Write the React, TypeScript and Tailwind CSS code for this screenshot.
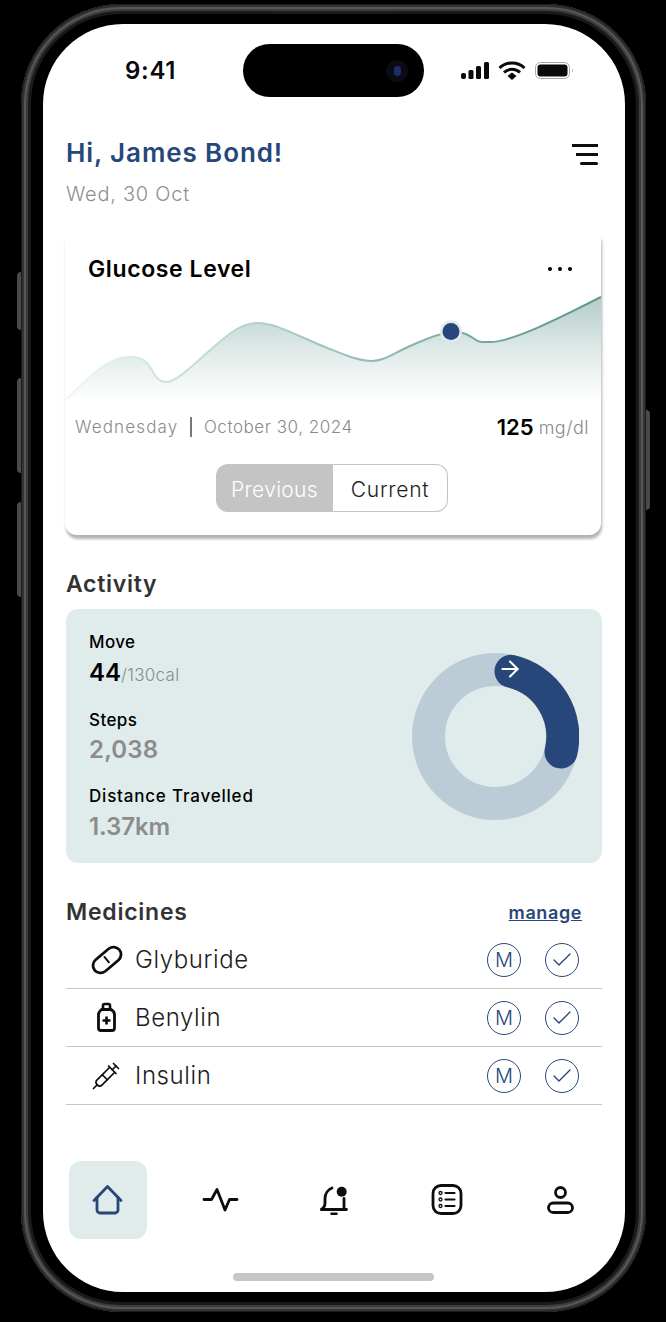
import { ArrowRight, Check, Syringe } from "lucide-react";

const font = { fontFamily: "Inter, 'Noto Sans', sans-serif" };

const medicines = ["Glyburide", "Benylin", "Insulin"];

const StatusIcons = () => (
  <svg width="113" height="20" viewBox="461 61 113 20" className="ml-[37px]">
    <rect x="461" y="73" width="5" height="6" rx="2" fill="#0a0a0a" />
    <rect x="468.5" y="70" width="5" height="9" rx="1.5" fill="#0a0a0a" />
    <rect x="476" y="66" width="5" height="13" rx="1.5" fill="#0a0a0a" />
    <rect x="484" y="62" width="5" height="17" rx="1.5" fill="#0a0a0a" />
    <path d="M499.500 68a18 18 0 0 1 25 0" fill="none" stroke="#0a0a0a" strokeWidth="3" />
    <path d="M504 72.500a11.500 11.500 0 0 1 16 0" fill="none" stroke="#0a0a0a" strokeWidth="3" />
    <path d="M507.500 76l4.500-3.400 4.500 3.400-4.500 4z" fill="#0a0a0a" />
    <rect x="535.500" y="62.500" width="34" height="16" rx="5" fill="none" stroke="#a8a8a8" />
    <rect x="537.500" y="64.500" width="30" height="12" rx="3" fill="#0a0a0a" />
    <path d="M572 68.500c1.200.4 1.200 3.600 0 4z" fill="#a8a8a8" />
  </svg>
);

const GlucoseChart = () => {
  const line =
    "M65 401C85 381 105 358 128 357C142 356 148 362 153 372C157 380 161 382 166 382C176 382 192 366 208 352C226 336 240 323 258 323C276 323 300 337 325 347C345 355 358 361 372 361C384 361 392 354 410 346C424 340 436 334 451 332C464 331 470 336 476 340C480 343 484 342 490 342C512 342 560 318 601 297";
  return (
    <svg width="536" height="107" viewBox="65 295 536 107" className="mt-[12px] block">
      <defs>
        <linearGradient id="area" gradientUnits="userSpaceOnUse" x1="0" y1="297" x2="0" y2="402">
          <stop offset="0" stopColor="#b3cdc9" />
          <stop offset="0.5" stopColor="#dfeae8" />
          <stop offset="1" stopColor="#ffffff" />
        </linearGradient>
        <linearGradient id="stroke" gradientUnits="userSpaceOnUse" x1="65" y1="0" x2="601" y2="0">
          <stop offset="0" stopColor="#f0f7f6" />
          <stop offset="0.3" stopColor="#b8d6d3" />
          <stop offset="1" stopColor="#5a918a" />
        </linearGradient>
      </defs>
      <path d={`${line}V402H65Z`} fill="url(#area)" />
      <path d={line} fill="none" stroke="url(#stroke)" strokeWidth="2" />
      <circle cx="451" cy="331.500" r="11" fill="#e0ecec" />
      <circle cx="451" cy="331.500" r="8.500" fill="#27477a" />
    </svg>
  );
};

const Donut = () => (
  <div className="relative h-[167px] w-[167px]">
    <svg width="167" height="167" viewBox="412 653 167 167">
      <circle cx="495.500" cy="736.500" r="67" fill="none" stroke="#bbccd7" strokeWidth="33" />
      <path
        d="M511 671.300A67 67 0 0 1 561 752"
        fill="none"
        stroke="#27477a"
        strokeWidth="33"
        strokeLinecap="round"
      />
    </svg>
    <ArrowRight size={26} strokeWidth={1.900} color="#ffffff" className="absolute left-[85px] top-[3px]" />
  </div>
);

const PillIcon = () => (
  <svg width="32" height="30" viewBox="90 945 32 30">
    <g transform="rotate(-40 106 960)" fill="none" stroke="#0d0d0d" strokeWidth="2.800">
      <rect x="90" y="952.500" width="32" height="15" rx="7.500" />
      <path d="M106 956v7" strokeWidth="2" strokeLinecap="round" />
    </g>
  </svg>
);

const BottleIcon = () => (
  <svg width="32" height="32" viewBox="90 1002 32 32">
    <path d="M102 1009v-3.500a1.500 1.500 0 0 1 1.500-1.500h4a1.500 1.500 0 0 1 1.500 1.500V1009" fill="none" stroke="#0d0d0d" strokeWidth="2.600" />
    <path d="M100.500 1009.500h9.500c2 1.200 3.500 2.800 3.500 5V1028a2.500 2.500 0 0 1-2.500 2.500h-11a2.500 2.500 0 0 1-2.500-2.500v-13.500c0-2 1.500-3.800 3-5z" fill="none" stroke="#0d0d0d" strokeWidth="2.800" />
    <path d="M105.500 1016.500v8M101.500 1020.500h8" stroke="#0d0d0d" strokeWidth="2.600" />
  </svg>
);

const medicineIcons = [
  <PillIcon key="pill" />,
  <BottleIcon key="bottle" />,
  <Syringe key="syringe" size={30} strokeWidth={1.400} color="#0d0d0d" className="-ml-[2px]" />,
];

const HomeIcon = () => (
  <svg width="40" height="40" viewBox="88 1180 40 40" fill="none" stroke="#27477a" strokeWidth="2.800" strokeLinecap="round" strokeLinejoin="round">
    <path d="M94 1200.500L107.500 1186.500L121 1200.500" />
    <path d="M97 1197.500V1210a3 3 0 0 0 3 3h15a3 3 0 0 0 3-3V1197.500" />
  </svg>
);

const PulseIcon = () => (
  <svg width="40" height="40" viewBox="201 1180 40 40" fill="none" stroke="#0d0d0d" strokeWidth="2.800" strokeLinecap="round" strokeLinejoin="round">
    <path d="M204 1199.500H211.500L217 1189.500L225 1210L229.500 1199.500H237" />
  </svg>
);

const BellIcon = () => (
  <svg width="40" height="40" viewBox="314 1180 40 40" fill="none" stroke="#0d0d0d" strokeWidth="2.800" strokeLinecap="round" strokeLinejoin="round">
    <path d="M321.500 1209.500c2-1.500 3.500-3 3.500-6v-5c0-5 3.500-9 7-10.500" />
    <path d="M344 1198.500v9c0 1 1 2 2.500 2H321.500" />
    <path d="M331.500 1213.800h5" strokeWidth="2.600" />
    <circle cx="341.700" cy="1191.700" r="5" fill="#0d0d0d" stroke="none" />
  </svg>
);

const ListIcon = () => (
  <svg width="40" height="40" viewBox="427 1180 40 40" fill="none" stroke="#0d0d0d" strokeLinecap="round">
    <rect x="433" y="1185.500" width="28" height="28" rx="8" strokeWidth="2.800" />
    <circle cx="440.500" cy="1193" r="1.500" strokeWidth="1.300" />
    <circle cx="440.500" cy="1199.500" r="1.500" strokeWidth="1.300" />
    <circle cx="440.500" cy="1206" r="1.500" strokeWidth="1.300" />
    <path d="M445.500 1193h9M445.500 1199.500h9M445.500 1206h9" strokeWidth="2.200" />
  </svg>
);

const UserIcon = () => (
  <svg width="40" height="40" viewBox="540 1180 40 40" fill="none" stroke="#0d0d0d" strokeWidth="2.800">
    <circle cx="560.500" cy="1192.500" r="5" />
    <rect x="548.500" y="1203" width="24" height="9.500" rx="4.750" />
  </svg>
);

const MedicineRow = ({ name, index }: { name: string; index: number }) => (
  <div className="flex h-[58px] items-center border-b border-[#c6c6c6]">
    <div className="flex w-[69px] items-center justify-center pl-[12px] pt-px">{medicineIcons[index]}</div>
    <span className="text-[24px] font-light leading-[30px] tracking-[0.6px] text-[#1c1c1c]">{name}</span>
    <div className="ml-auto mr-[23px] flex items-center gap-[24px]">
      <div className="flex h-[34px] w-[34px] items-center justify-center rounded-full border-[1.5px] border-[#27477a] text-[20px] font-light text-[#27477a]">
        M
      </div>
      <div className="flex h-[34px] w-[34px] items-center justify-center rounded-full border-[1.5px] border-[#27477a]">
        <Check size={24} strokeWidth={1.400} color="#27477a" />
      </div>
    </div>
  </div>
);

const App = () => {
  return (
    <div style={font} className="relative h-[1322px] w-[666px] overflow-hidden bg-black">
      {/* side buttons */}
      <div className="absolute left-[17px] top-[272px] h-[58px] w-[4px] rounded-l-sm bg-[#4a4a4a]" />
      <div className="absolute left-[17px] top-[378px] h-[95px] w-[4px] rounded-l-sm bg-[#4a4a4a]" />
      <div className="absolute left-[17px] top-[502px] h-[95px] w-[4px] rounded-l-sm bg-[#4a4a4a]" />
      <div className="absolute left-[646px] top-[410px] h-[100px] w-[4px] rounded-r-sm bg-[#4a4a4a]" />
      <div className="absolute left-[272px] top-[11px] h-[3px] w-[123px] bg-[#1c1c1c]" />

      <div className="ml-[21px] mt-[4px] h-[1308px] w-[625px] rounded-[100px] bg-black pl-[22px] pr-[21px] pt-[20px] shadow-[inset_0_0_0_1px_#1c1c1c,inset_0_0_0_3px_#333333,inset_0_0_0_5px_#575757,inset_0_0_0_7px_#3c3c3c,inset_0_0_0_10px_#1a1a1a]">
        <div className="h-[1268px] w-[582px] overflow-hidden rounded-[80px] bg-white">
          {/* status bar */}
          <div className="mt-[20px] flex h-[53px] items-center pl-[82px]">
            <span className="w-[118px] text-[24px] font-semibold leading-none tracking-[0.7px] text-[#0a0a0a]">9:41</span>
            <div className="flex h-[53px] w-[181px] items-center justify-end rounded-full bg-black pr-[16px]">
              <div className="flex h-[22px] w-[22px] items-center justify-center rounded-full bg-[#0a0b14]">
                <div className="h-[10px] w-[7px] rounded-full bg-[#1f2c66]" />
              </div>
            </div>
            <StatusIcons />
          </div>

          <div className="px-[23px]">
            {/* greeting */}
            <div className="mt-[40px] flex items-start justify-between">
              <div>
                <h1 className="text-[26px] font-semibold leading-[32px] tracking-[0.9px] text-[#27477a]">Hi, James Bond!</h1>
                <p className="mt-[13px] text-[20px] font-light leading-[24px] tracking-[0.75px] text-[#8f8f8f]">Wed, 30 Oct</p>
              </div>
              <div className="mr-[4px] mt-[7px] flex flex-col items-end gap-[6.500px]">
                <div className="h-[2.500px] w-[26px] bg-[#0d0d0d]" />
                <div className="h-[2.500px] w-[22px] bg-[#0d0d0d]" />
                <div className="h-[2.500px] w-[18px] rounded-full bg-[#0d0d0d]" />
              </div>
            </div>

            {/* glucose card */}
            <div className="-ml-px mt-[30px] w-[536px] rounded-b-[12px] bg-white pb-[23px] pt-[19px] shadow-[1px_4px_3px_rgba(0,0,0,0.3)]">
              <div className="flex items-center justify-between pl-[23px] pr-[29px]">
                <h2 className="text-[23px] font-semibold leading-[28px] tracking-[0.6px] text-black">Glucose Level</h2>
                <div className="flex gap-[6px]">
                  <div className="h-[4px] w-[4px] rounded-full bg-black" />
                  <div className="h-[4px] w-[4px] rounded-full bg-black" />
                  <div className="h-[4px] w-[4px] rounded-full bg-black" />
                </div>
              </div>
              <GlucoseChart />
              <div className="mt-[13px] flex h-[24px] items-center pl-[10px] pr-[12px] text-[17px] font-light leading-[24px] text-[#8a8a8a]">
                <span className="tracking-[1.150px]">Wednesday</span>
                <div className="mx-[12px] h-[20px] w-[1.500px] bg-[#777777]" />
                <span className="tracking-[0.55px]">October 30, 2024</span>
                <span className="ml-auto text-[22px] font-semibold text-black">125</span>
                <span className="ml-[5px] pt-[2px] text-[18px] leading-[22px] tracking-[0.5px]">mg/dl</span>
              </div>
              <div className="mr-[2px] mt-[25px] flex justify-center">
                <div className="flex h-[48px] w-[117px] items-center justify-center rounded-l-[12px] bg-[#c4c4c4] pt-[3px] text-[21px] font-light tracking-[0.3px] text-white">
                  Previous
                </div>
                <div className="flex h-[48px] w-[115px] items-center justify-center rounded-r-[12px] border border-l-0 border-[#c4c4c4] pt-[3px] text-[21px] font-light tracking-[0.7px] text-[#1c1c1c]">
                  Current
                </div>
              </div>
            </div>

            {/* activity */}
            <h2 className="mt-[35px] text-[23px] font-semibold leading-[28px] tracking-[0.7px] text-[#333333]">Activity</h2>
            <div className="mt-[11px] flex h-[254px] w-[536px] items-center justify-between rounded-[12px] bg-[#e0eceb] pl-[23px] pr-[23px]">
              <div className="self-start pt-[23px]">
                <p className="text-[17px] font-medium leading-[20px] tracking-[0.4px] text-black">Move</p>
                <p className="mt-[7px] leading-[28px]">
                  <span className="text-[24px] font-semibold text-black">44</span>
                  <span className="text-[17px] font-light tracking-[0.3px] text-[#8a8a8a]">/130cal</span>
                </p>
                <p className="mt-[21px] text-[17px] font-medium leading-[20px] tracking-[0.4px] text-black">Steps</p>
                <p className="mt-[6px] text-[24px] font-semibold leading-[28px] tracking-[0.2px] text-[#8c8c8c]">2,038</p>
                <p className="mt-[22px] text-[17px] font-medium leading-[20px] tracking-[0.8px] text-black">Distance Travelled</p>
                <p className="mt-[7px] text-[24px] font-semibold leading-[28px] tracking-[-0.1px] text-[#8c8c8c]">1.37km</p>
              </div>
              <Donut />
            </div>

            {/* medicines */}
            <div className="mt-[35px] flex items-center justify-between">
              <h2 className="text-[23px] font-semibold leading-[28px] tracking-[0.75px] text-[#333333]">Medicines</h2>
              <a className="mr-[20px] text-[18px] font-semibold tracking-[0.6px] text-[#27477a] underline">manage</a>
            </div>
            <div className="mt-[5px]">
              {medicines.map((name, i) => (
                <MedicineRow key={name} name={name} index={i} />
              ))}
            </div>
          </div>

          {/* bottom nav */}
          <div className="mt-[56px] flex pl-[8.500px]">
            <div className="flex h-[78px] w-[113px] items-center justify-center">
              <div className="flex h-[78px] w-[78px] items-center justify-center rounded-[12px] bg-[#e0eceb]">
                <HomeIcon />
              </div>
            </div>
            <div className="flex h-[78px] w-[113px] items-center justify-center"><PulseIcon /></div>
            <div className="flex h-[78px] w-[113px] items-center justify-center"><BellIcon /></div>
            <div className="flex h-[78px] w-[113px] items-center justify-center"><ListIcon /></div>
            <div className="flex h-[78px] w-[113px] items-center justify-center"><UserIcon /></div>
          </div>
          <div className="ml-[190px] mt-[34px] h-[8px] w-[201px] rounded-full bg-[#c6c6c6]" />
        </div>
      </div>
    </div>
  );
};

export default App;
